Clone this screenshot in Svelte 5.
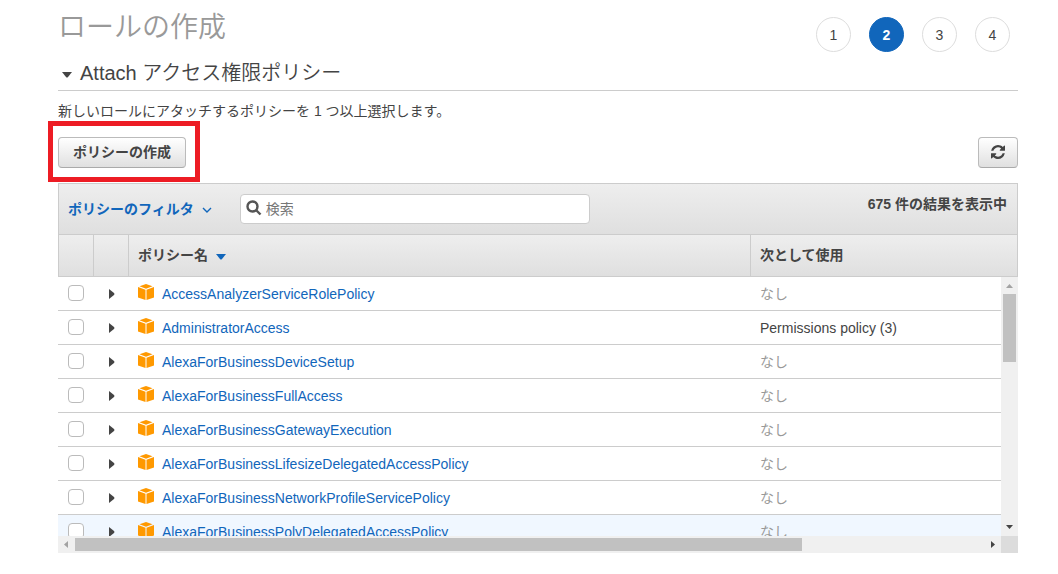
<script lang="ts">
  interface Policy {
    name: string;
    usedAs: string;
  }

  const steps = [1, 2, 3, 4];
  const currentStep = 2;
  const total = 675;

  let query: string = "";
  let open: boolean = true;
  let hovered: string = "AlexaForBusinessPolyDelegatedAccessPolicy";
  let selected: string[] = [];

  const policies: Policy[] = [
    { name: "AccessAnalyzerServiceRolePolicy", usedAs: "" },
    { name: "AdministratorAccess", usedAs: "Permissions policy (3)" },
    { name: "AlexaForBusinessDeviceSetup", usedAs: "" },
    { name: "AlexaForBusinessFullAccess", usedAs: "" },
    { name: "AlexaForBusinessGatewayExecution", usedAs: "" },
    { name: "AlexaForBusinessLifesizeDelegatedAccessPolicy", usedAs: "" },
    { name: "AlexaForBusinessNetworkProfileServicePolicy", usedAs: "" },
    { name: "AlexaForBusinessPolyDelegatedAccessPolicy", usedAs: "" },
  ];

  $: visible = policies.filter((p) =>
    p.name.toLowerCase().includes(query.toLowerCase())
  );
</script>

<main>
  <header>
    <h1>ロールの作成</h1>
    <ol class="steps">
      {#each steps as step}
        <li class:current={step === currentStep}>{step}</li>
      {/each}
    </ol>
  </header>

  <h2>
    <button class="section-toggle" aria-expanded={open} on:click={() => (open = !open)}>
      <svg width="10" height="6" viewBox="0 0 10 6"><path d="M0 0h10L6 5q-1 1-2 0z" /></svg>
      Attach アクセス権限ポリシー
    </button>
  </h2>

  {#if open}
    <p>新しいロールにアタッチするポリシーを 1 つ以上選択します。</p>

    <div class="actions">
      <div class="highlight">
        <button class="btn">ポリシーの作成</button>
      </div>
      <button class="btn refresh" aria-label="更新">
        <svg width="14" height="14" viewBox="0 0 1536 1536">
          <path
            d="M1511 928q0 5-1 7-64 268-268 434.5T764 1536q-146 0-282.500-55T238 1324l-129 129q-19 19-45 19t-45-19-19-45V960q0-26 19-45t45-19h448q26 0 45 19t19 45-19 45l-137 137q71 66 161 102t187 36q134 0 250-65t186-179q11-17 53-117 8-23 30-23h192q13 0 22.500 9.500t9.500 22.500zm25-800v448q0 26-19 45t-45 19h-448q-26 0-45-19t-19-45 19-45l138-138Q969 256 768 256q-134 0-250 65T332 500q-11 17-53 117-8 23-30 23H50q-13 0-22.500-9.500T18 608v-7q65-268 270-434.500T768 0q146 0 284 55.500T1297 212l130-129q19-19 45-19t45 19 19 45z"
          />
        </svg>
      </button>
    </div>

    <div class="toolbar">
      <button class="filter" aria-haspopup="true">
        ポリシーのフィルタ
        <svg width="10" height="6" viewBox="0 0 10 6"><path d="M1 1l4 4 4-4" /></svg>
      </button>
      <label class="search">
        <svg width="16" height="16" viewBox="0 0 16 16">
          <circle cx="6.500" cy="6.500" r="5" />
          <path d="M10.500 10.500l4 4" />
        </svg>
        <input type="text" placeholder="検索" aria-label="検索" bind:value={query} />
      </label>
      <span class="count">{total} 件の結果を表示中</span>
    </div>

    <div class="list">
      <table>
        <colgroup>
          <col class="narrow" />
          <col class="narrow" />
          <col />
          <col class="used" />
        </colgroup>
        <thead>
          <tr>
            <th></th>
            <th></th>
            <th>
              ポリシー名
              <svg class="sort" width="10" height="6" viewBox="0 0 10 6"><path d="M0 0h10L6 5q-1 1-2 0z" /></svg>
            </th>
            <th>次として使用</th>
          </tr>
        </thead>
        <tbody>
          {#each visible as policy}
            <tr class:hovered={policy.name === hovered} on:mouseenter={() => (hovered = policy.name)}>
              <td class="check">
                <input type="checkbox" aria-label={policy.name} value={policy.name} bind:group={selected} />
              </td>
              <td>
                <button class="expand" aria-label="詳細">
                  <svg width="6" height="10" viewBox="0 0 6 10"><path d="M0 0l5 4q1 1 0 2l-5 4z" /></svg>
                </button>
              </td>
              <td>
                <div class="name">
                  <svg class="cube" width="16" height="16" viewBox="0 0 16 16">
                    <path d="M8 0l6.500 2.200L8 4.800 1.500 2.200z" />
                    <path d="M0 3l7.500 2.800V16L0 13.500z" />
                    <path d="M16 3l-7.500 2.800V16l7.500-2.500z" />
                  </svg>
                  <a href="#{policy.name}">{policy.name}</a>
                </div>
              </td>
              <td class:none={!policy.usedAs}>{policy.usedAs || "なし"}</td>
            </tr>
          {/each}
        </tbody>
      </table>

      <div class="bar vertical">
        <svg class="dim" width="17" height="17" viewBox="0 0 17 17"><path d="M5 11l3.500-4 3.500 4z" /></svg>
        <div class="thumb"></div>
        <svg width="17" height="17" viewBox="0 0 17 17"><path d="M5 6h7l-3.500 4z" /></svg>
      </div>
      <div class="bar horizontal">
        <svg class="dim" width="17" height="17" viewBox="0 0 17 17"><path d="M10 5v7L6 8.500z" /></svg>
        <div class="track"><div class="thumb"></div></div>
        <svg width="17" height="17" viewBox="0 0 17 17"><path d="M7 5v7l4-3.500z" /></svg>
      </div>
    </div>
  {/if}
</main>

<style>
  :global(body) {
    background: #fff;
  }

  main {
    padding: 0 40px 20px 58px;
    font-family: "Liberation Sans", "Noto Sans CJK JP", sans-serif;
    font-size: 14px;
    line-height: 20px;
    color: #444;
  }

  button {
    font: inherit;
    color: inherit;
    cursor: pointer;
  }

  svg {
    flex: none;
    fill: #444;
  }

  header {
    display: flex;
    justify-content: space-between;
    align-items: flex-start;
  }

  h1 {
    margin: 0;
    font-size: 28px;
    font-weight: 350;
    line-height: 56px;
    color: #999;
  }

  .steps {
    display: flex;
    gap: 18px;
    margin: 17px 8px 0 0;
    padding: 0;
    list-style: none;
  }

  .steps li {
    box-sizing: border-box;
    width: 35px;
    height: 35px;
    border: 1px solid #ddd;
    border-radius: 50%;
    line-height: 34px;
    text-align: center;
  }

  .steps .current {
    border-color: #1166bb;
    background: #1166bb;
    color: #fff;
    font-weight: bold;
  }

  h2 {
    margin: 0;
    border-bottom: 1px solid #ccc;
    font-size: 20px;
    font-weight: 350;
    line-height: 34px;
  }

  .section-toggle {
    display: flex;
    align-items: center;
    gap: 8px;
    padding: 0 4px;
    border: 0;
    background: none;
  }

  .section-toggle svg {
    margin-top: 4px;
  }

  p {
    margin: 10px 0 16px;
  }

  .actions {
    display: flex;
    justify-content: space-between;
    margin-bottom: 15px;
  }

  .btn {
    display: block;
    height: 31px;
    padding: 0 14px 2px;
    border: 1px solid #bbb;
    border-bottom-color: #aaa;
    border-radius: 4px;
    background: linear-gradient(#fff, #e0e0e0);
    font-weight: bold;
  }

  .refresh {
    padding: 0 12px 2px;
  }

  .refresh svg {
    display: block;
  }

  .highlight {
    position: relative;
  }

  /* red frame round the create button */
  .highlight::after {
    content: "";
    position: absolute;
    inset: -16px -14px -14px -10px;
    border: 5px solid #ed1c24;
    pointer-events: none;
  }

  .toolbar {
    display: flex;
    align-items: center;
    padding: 10px 10px 10px 9px;
    border: 1px solid #ccc;
    border-bottom: 0;
    background: linear-gradient(#eee, #dfdfdf);
  }

  .filter {
    display: flex;
    align-items: center;
    gap: 8px;
    margin-right: 28px;
    padding: 0;
    border: 0;
    background: none;
    color: #1166bb;
    font-weight: bold;
    white-space: nowrap;
  }

  .filter svg {
    margin-top: 2px;
    fill: none;
    stroke: #1166bb;
    stroke-width: 1.4;
  }

  .search {
    display: flex;
    align-items: center;
    gap: 4px;
    box-sizing: border-box;
    width: 350px;
    height: 30px;
    padding: 0 5px;
    border: 1px solid #ccc;
    border-radius: 4px;
    background: #fff;
  }

  .search svg {
    margin-bottom: 2px;
    fill: none;
    stroke: #555;
    stroke-width: 2.4;
  }

  .search input {
    flex: 1;
    min-width: 0;
    padding: 0;
    border: 0;
    outline: 0;
    background: none;
    font: inherit;
    color: inherit;
  }

  .search input::placeholder {
    color: #777;
  }

  .count {
    align-self: flex-start;
    margin-left: auto;
    font-weight: bold;
  }

  .list {
    position: relative;
    height: 319px;
    overflow: hidden;
  }

  table {
    width: 100%;
    border-spacing: 0;
    table-layout: fixed;
  }

  .narrow {
    width: 35px;
  }

  .used {
    width: 268px;
  }

  th {
    height: 39px;
    padding: 0 9px 2px;
    border: 1px solid #ccc;
    border-right: 0;
    background: linear-gradient(#eee, #dfdfdf);
    text-align: left;
  }

  th:last-child {
    border-right: 1px solid #ccc;
  }

  .sort {
    margin-left: 4px;
    fill: #1166bb;
  }

  td {
    height: 33px;
    padding: 0 10px;
    border-bottom: 1px solid #ccc;
  }

  .hovered td {
    background: #f0f7ff;
  }

  .none {
    color: #999;
  }

  .check {
    height: 31px;
    padding-bottom: 2px;
  }

  td input {
    display: block;
    appearance: none;
    width: 16px;
    height: 16px;
    margin: 0;
    border: 1px solid #bbb;
    border-radius: 4px;
    background: #fff;
  }

  td input:checked {
    background: #1166bb;
  }

  .expand {
    display: block;
    padding: 0 6px;
    border: 0;
    background: none;
  }

  .expand svg {
    display: block;
  }

  .name {
    display: flex;
    align-items: center;
    gap: 8px;
  }

  .cube {
    margin-bottom: 4px;
    fill: #ff9900;
  }

  a {
    color: #1166bb;
    text-decoration: none;
  }

  a:hover {
    text-decoration: underline;
  }

  .bar {
    position: absolute;
    display: flex;
    background: #f0f0f0;
  }

  .bar .thumb {
    background: #c1c1c1;
  }

  .bar .dim {
    fill: #a3a3a3;
  }

  .vertical {
    top: 43px;
    right: 0;
    bottom: 17px;
    flex-direction: column;
  }

  .vertical .thumb {
    height: 68px;
    margin: 0 2px auto;
  }

  .horizontal {
    left: 0;
    right: 0;
    bottom: 0;
    border-right: 17px solid #dcdcdc;
  }

  .track {
    flex: 1;
    padding: 2px 0;
  }

  .track .thumb {
    width: 80%;
    height: 13px;
  }
</style>
